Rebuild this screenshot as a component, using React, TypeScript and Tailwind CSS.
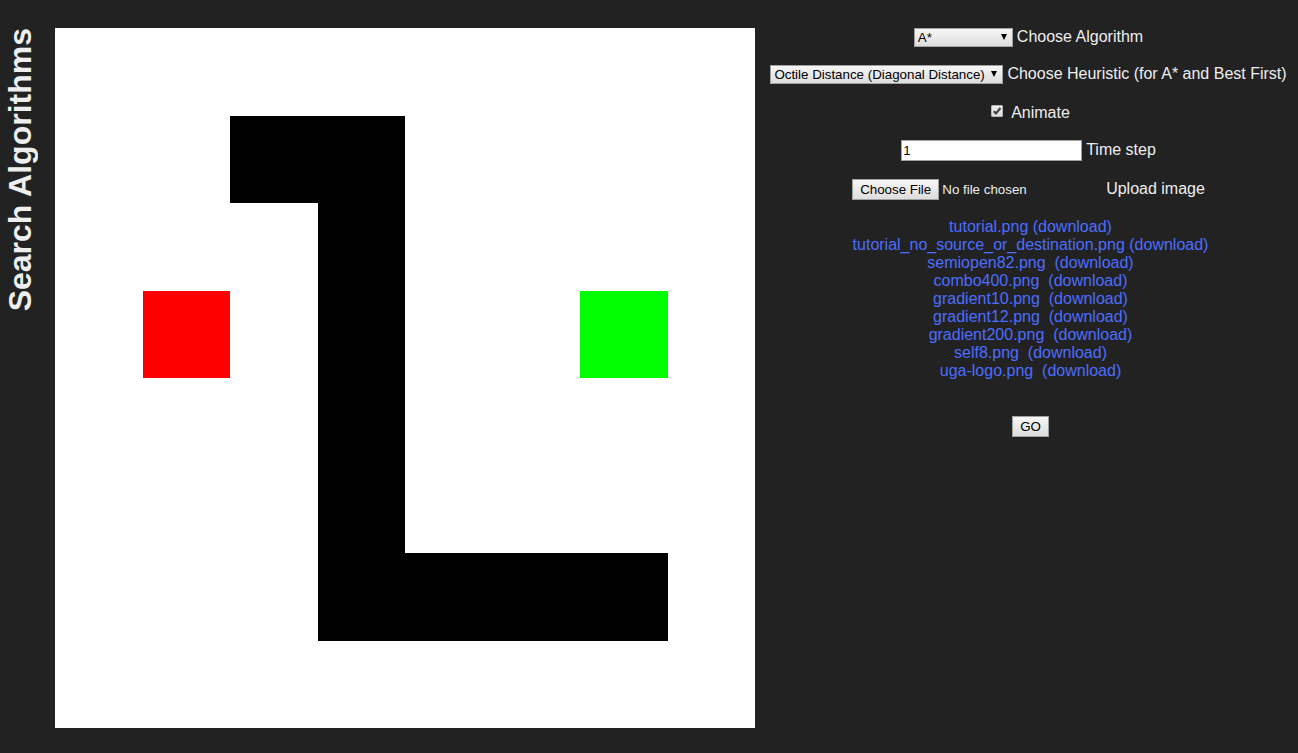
import { useState, type ReactNode } from "react";

const FIELD = "border border-[#a0a0a0] text-black [font-size:revert]";
const RAISED = "bg-linear-to-b from-[#f6f6f6] to-[#dddddd]";

const FILES = [
  { name: "tutorial.png", spaced: false },
  { name: "tutorial_no_source_or_destination.png", spaced: false },
  { name: "semiopen82.png", spaced: true },
  { name: "combo400.png", spaced: true },
  { name: "gradient10.png", spaced: true },
  { name: "gradient12.png", spaced: true },
  { name: "gradient200.png", spaced: true },
  { name: "self8.png", spaced: true },
  { name: "uga-logo.png", spaced: true },
];

function Board() {
  return (
    <svg
      viewBox="0 0 8 8"
      shapeRendering="crispEdges"
      role="img"
      aria-label="Search grid"
      className="block aspect-square w-full bg-white"
    >
      <path d="M2 1H4V6H7V7H3V2H2Z" fill="#000000" />
      <rect x="1" y="3" width="1" height="1" fill="#ff0000" />
      <rect x="6" y="3" width="1" height="1" fill="#00ff00" />
    </svg>
  );
}

function Row({ id, label, children }: { id: string; label: string; children: ReactNode }) {
  return (
    <div className="flex items-center justify-center gap-1 pr-1">
      {children}
      <label htmlFor={id} className="-mt-0.5">
        {label}
      </label>
    </div>
  );
}

function Dropdown({ id, options, width }: { id: string; options: string[]; width: string }) {
  return (
    <div className={`relative ${width}`}>
      <select
        id={id}
        className={`block h-[19px] w-full appearance-none rounded-none pl-[3px] leading-4 ${FIELD} ${RAISED}`}
      >
        {options.map((o) => (
          <option key={o}>{o}</option>
        ))}
      </select>
      <svg
        viewBox="0 0 6 6"
        aria-hidden="true"
        className="pointer-events-none absolute top-1.5 right-1.5 size-1.5"
      >
        <path d="M0 0H6L3 6Z" fill="#000000" />
      </svg>
    </div>
  );
}

export default function App() {
  const [animate, setAnimate] = useState(true);
  const [step, setStep] = useState("1");

  return (
    <div className="grid min-h-screen grid-cols-[auto_minmax(0,700px)_1fr] items-start bg-[#222222] py-7 font-['Liberation_Sans',Arial,sans-serif] text-base leading-[18px] text-[#eeeeee]">
      <h1 className="mr-4 ml-0.5 rotate-180 text-[32px] leading-[37px] font-bold [writing-mode:vertical-rl]">
        Search Algorithms
      </h1>
      <Board />
      <form
        className="flex flex-col gap-[18px] pl-2 whitespace-nowrap"
        onSubmit={(e) => e.preventDefault()}
      >
        <Row id="algorithm" label="Choose Algorithm">
          <Dropdown
            id="algorithm"
            width="w-[99px]"
            options={["A*", "Best First", "Dijkstra"]}
          />
        </Row>
        <Row id="heuristic" label="Choose Heuristic (for A* and Best First)">
          <Dropdown
            id="heuristic"
            width="w-[233px]"
            options={["Octile Distance (Diagonal Distance)", "Manhattan Distance", "Euclidean Distance"]}
          />
        </Row>
        <div className="flex h-5 items-center justify-center gap-2">
          <span className="relative mb-0.5 block size-3">
            <input
              id="animate"
              type="checkbox"
              checked={animate}
              onChange={(e) => setAnimate(e.target.checked)}
              className="peer block size-3 appearance-none rounded-[1px] border border-[#b5b5b5] bg-linear-to-b from-[#eeeeee] to-[#dddddd]"
            />
            <svg
              viewBox="0 0 12 12"
              aria-hidden="true"
              className="pointer-events-none absolute inset-0 hidden size-3 peer-checked:block"
            >
              <path d="M2.7 6.2L5 8.4L9.4 3" fill="none" stroke="#444444" strokeWidth="2.2" />
            </svg>
          </span>
          <label htmlFor="animate" className="pt-0.5">
            Animate
          </label>
        </div>
        <Row id="step" label="Time step">
          <input
            id="step"
            type="text"
            value={step}
            onChange={(e) => setStep(e.target.value)}
            className={`h-[21px] w-[181px] bg-white px-px ${FIELD}`}
          />
        </Row>
        <Row id="upload" label="Upload image">
          <input
            id="upload"
            type="file"
            className="h-[21px] w-[250px] [font-size:revert] file:mr-[3px] file:h-[21px] file:border file:border-solid file:border-[#a0a0a0] file:bg-linear-to-b file:from-[#f6f6f6] file:to-[#dddddd] file:px-[7px] file:text-black file:[font-size:revert]"
          />
        </Row>
        <ul className="text-center text-[#4d6dff]">
          {FILES.map(({ name, spaced }) => (
            <li key={name}>
              <a href={`#${name}`}>{name}</a>
              {spaced ? "\u00a0 " : " "}
              <a href={`#${name}`} download={name}>
                (download)
              </a>
            </li>
          ))}
        </ul>
        <button type="submit" className={`mt-[18px] h-[21px] self-center px-[7px] ${FIELD} ${RAISED}`}>
          GO
        </button>
      </form>
    </div>
  );
}
